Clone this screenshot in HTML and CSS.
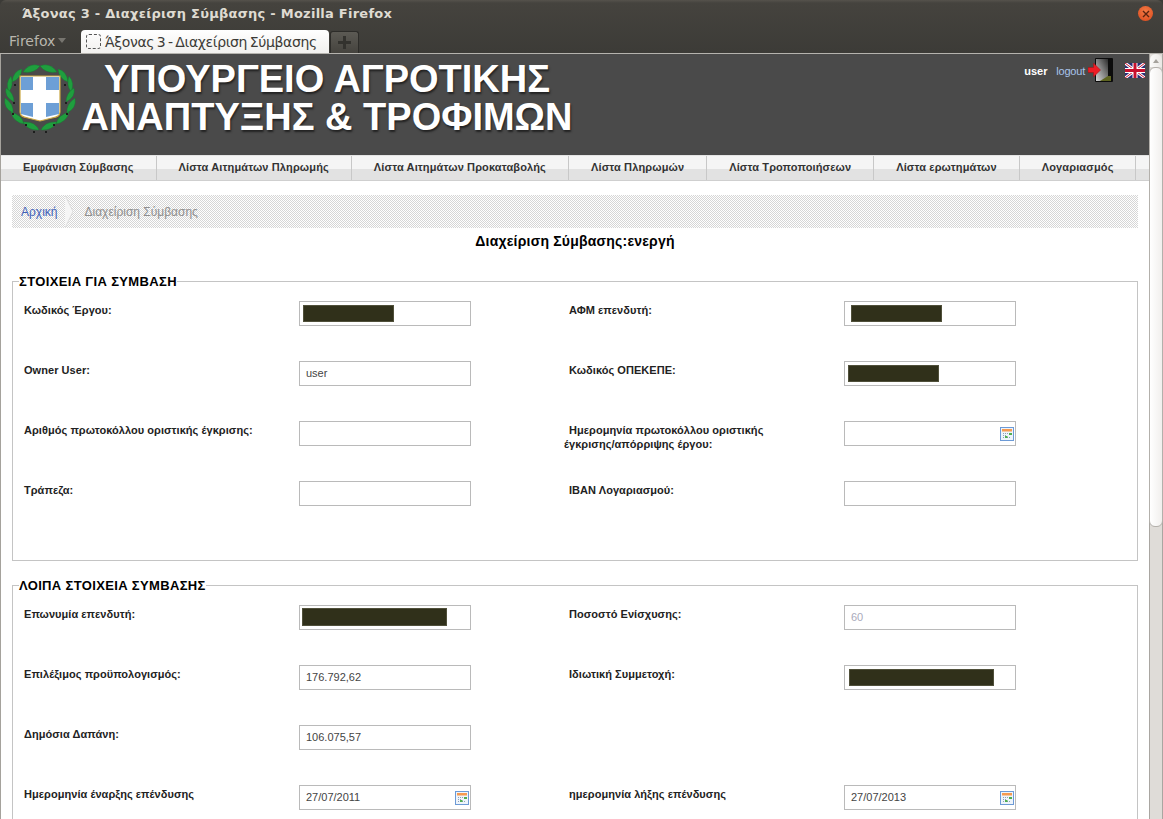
FILE: index.html
```html
<!DOCTYPE html>
<html lang="el">
<head>
<meta charset="utf-8">
<title>Άξονας 3 - Διαχείριση Σύμβασης - Mozilla Firefox</title>
<link rel="stylesheet" href="styles.css">
</head>
<body>
<div class="window">
  <div class="chrome">
    <div class="titlebar">
      <span class="window-title">Άξονας 3 - Διαχείριση Σύμβασης - Mozilla Firefox</span>
      <span class="close-btn">
        <svg width="8" height="8" viewBox="0 0 8 8"><path d="M1 1l6 6M7 1l-6 6" stroke="#5a2410" stroke-width="1.4"/></svg>
      </span>
    </div>
    <div class="tabbar">
      <span class="ff-menu">Firefox<i class="ff-caret"></i></span>
      <span class="tab"><i class="tab-icon"></i><span>Άξονας 3 - Διαχείριση Σύμβασης</span></span>
      <span class="newtab">
        <svg width="13" height="13" viewBox="0 0 13 13"><path d="M5 0h3v5h5v3H8v5H5V8H0V5h5z" fill="#33322e"/></svg>
      </span>
    </div>
  </div>
  <div class="viewport">
    <div class="page">
      <header class="site-header">
        <svg class="emblem" width="72" height="70" viewBox="0 0 72 70">
          <defs>
            <g id="wreath">
              <g fill="#1f9e3e" stroke="#157a30" stroke-width=".4">
                <path d="M36 2Q26-2 19 8Q30 10 36 2z"/>
                <path d="M18 5Q9 7 8 18Q17 15 18 5z"/>
                <path d="M7 12Q1 19 5 28Q10 21 7 12z"/>
                <path d="M2 24Q0 33 10 38Q10 29 2 24z"/>
                <path d="M1 34Q-1 44 9 49Q10 40 1 34z"/>
                <path d="M7 48Q9 58 20 60Q18 51 7 48z"/>
                <path d="M19 58Q24 67 35 66Q31 57 19 58z"/>
              </g>
              <path d="M10 20h2v2h-2zM9 38h2v2H9zM8 49h2v2H8zM21 60h2v2h-2zM29 67h2v2h-2z" fill="#1d1d1d"/>
            </g>
          </defs>
          <use href="#wreath"/>
          <use href="#wreath" transform="matrix(-1 0 0 1 72 0)"/>
          <path d="M16 12h40v36c0 4-3 5-8 6l-12 3-12-3c-5-1-8-2-8-6z" fill="#fff" stroke="#c9a640" stroke-width="1.200"/>
          <path d="M17 13h12v13H17zM42 13h13v13H42zM17 39h12v14l-12-3zM42 39h13v11l-13 3z" fill="#6d9fd6"/>
        </svg>
        <h1 class="ministry">ΥΠΟΥΡΓΕΙΟ ΑΓΡΟΤΙΚΗΣ<br>ΑΝΑΠΤΥΞΗΣ &amp; ΤΡΟΦΙΜΩΝ</h1>
        <div class="user-box">
          <b class="user-name">user</b>
          <a class="logout" href="#">logout</a>
          <svg class="door" width="26" height="25" viewBox="0 0 26 25">
            <defs>
              <linearGradient id="door-panel" x1="0" y1="1" x2="1" y2="0">
                <stop offset="0" stop-color="#d8d8d8"/>
                <stop offset=".55" stop-color="#7c7c7c"/>
                <stop offset="1" stop-color="#2c2c2c"/>
              </linearGradient>
            </defs>
            <rect x="7" y="0" width="18" height="24" rx="1" fill="#0c0c0c"/>
            <path d="M8 1h12v22H8z" fill="url(#door-panel)"/>
            <path d="M12 23l8-5h3v5z" fill="#5e6420"/>
            <path d="M0 9.500h5.500V5l7 7-7 7v-4.500H0z" fill="#ee1c25" stroke="#a00e14" stroke-width=".5"/>
          </svg>
          <svg class="flag" width="20" height="15" viewBox="0 0 20 15">
            <rect width="20" height="15" fill="#2a2f78"/>
            <path d="M0 0l20 15M20 0L0 15" stroke="#fff" stroke-width="3"/>
            <path d="M0 0l20 15M20 0L0 15" stroke="#c8102e" stroke-width="1"/>
            <path d="M10 0v15M0 7.500h20" stroke="#fff" stroke-width="5"/>
            <path d="M10 0v15M0 7.500h20" stroke="#c8102e" stroke-width="3"/>
          </svg>
        </div>
      </header>
      <nav class="main-nav">
        <a class="nav-item" href="#">Εμφάνιση Σύμβασης</a>
        <a class="nav-item" href="#">Λίστα Αιτημάτων Πληρωμής</a>
        <a class="nav-item" href="#">Λίστα Αιτημάτων Προκαταβολής</a>
        <a class="nav-item" href="#">Λίστα Πληρωμών</a>
        <a class="nav-item" href="#">Λίστα Τροποποιήσεων</a>
        <a class="nav-item" href="#">Λίστα ερωτημάτων</a>
        <a class="nav-item" href="#">Λογαριασμός</a>
      </nav>
      <main class="content">
        <div class="breadcrumb">
          <a class="crumb-home" href="#">Αρχική</a>
          <svg class="crumb-sep" width="9" height="33" viewBox="0 0 9 33"><path d="M0 0l8 16.500L0 33" fill="#f6f6f6" stroke="#dcdcdc"/></svg>
          <span class="crumb-current">Διαχείριση Σύμβασης</span>
        </div>
        <h2 class="page-title">Διαχείριση Σύμβασης:ενεργή</h2>

        <fieldset class="group">
          <legend class="group-title">ΣΤΟΙΧΕΙΑ ΓΙΑ ΣΥΜΒΑΣΗ</legend>
          <div class="form-grid">
            <label class="lbl">Κωδικός Έργου:</label>
            <div class="field"><span class="redact redact-a"></span></div>
            <i></i>
            <label class="lbl">ΑΦΜ επενδυτή:</label>
            <div class="field"><span class="redact redact-b"></span></div>
            <i></i>

            <label class="lbl">Owner User:</label>
            <div class="field">user</div>
            <i></i>
            <label class="lbl">Κωδικός ΟΠΕΚΕΠΕ:</label>
            <div class="field"><span class="redact redact-c"></span></div>
            <i></i>

            <label class="lbl">Αριθμός πρωτοκόλλου οριστικής έγκρισης:</label>
            <div class="field"></div>
            <i></i>
            <label class="lbl lbl-wrap">Ημερομηνία πρωτοκόλλου οριστικής έγκρισης/απόρριψης έργου:</label>
            <div class="field"><svg class="cal" viewBox="0 0 14 14"><use href="#cal-icon"/></svg></div>
            <i></i>

            <label class="lbl">Τράπεζα:</label>
            <div class="field"></div>
            <i></i>
            <label class="lbl">ΙΒΑΝ Λογαριασμού:</label>
            <div class="field"></div>
            <i></i>
          </div>
        </fieldset>

        <fieldset class="group">
          <legend class="group-title">ΛΟΙΠΑ ΣΤΟΙΧΕΙΑ ΣΥΜΒΑΣΗΣ</legend>
          <div class="form-grid">
            <label class="lbl">Επωνυμία επενδυτή:</label>
            <div class="field"><span class="redact redact-d"></span></div>
            <i></i>
            <label class="lbl">Ποσοστό Ενίσχυσης:</label>
            <div class="field field-muted">60</div>
            <i></i>

            <label class="lbl">Επιλέξιμος προϋπολογισμός:</label>
            <div class="field">176.792,62</div>
            <i></i>
            <label class="lbl">Ιδιωτική Συμμετοχή:</label>
            <div class="field"><span class="redact redact-e"></span></div>
            <i></i>

            <label class="lbl">Δημόσια Δαπάνη:</label>
            <div class="field">106.075,57</div>
            <i></i>
            <span></span><span></span><i></i>

            <label class="lbl">Ημερομηνία έναρξης επένδυσης</label>
            <div class="field">27/07/2011<svg class="cal" viewBox="0 0 14 14"><use href="#cal-icon"/></svg></div>
            <i></i>
            <label class="lbl">ημερομηνία λήξης επένδυσης</label>
            <div class="field">27/07/2013<svg class="cal" viewBox="0 0 14 14"><use href="#cal-icon"/></svg></div>
            <i></i>
          </div>
        </fieldset>
      </main>
    </div>
    <div class="scrollbar">
      <div class="sb-btn"><i class="sb-arrow"></i></div>
      <div class="sb-thumb"></div>
    </div>
  </div>
</div>
<svg class="defs" width="0" height="0">
  <symbol id="cal-icon" viewBox="0 0 14 14">
    <rect x=".5" y=".5" width="13" height="13" fill="#eef4fb" stroke="#6c9ad6"/>
    <rect x="2" y="2" width="10" height="2.500" fill="#f59a50"/>
    <path d="M3 6h1v1H3zM5 6h1v1H5zM7 6h1v1H7zM3 8h1v1H3zM5 8h1v1H5zM3 10h1v1H3zM7 10h1v1H7zM9 10h1v1H9z" fill="#8fa0b5"/>
    <rect x="9" y="6" width="3" height="2" fill="#4fae4f"/>
    <rect x="5" y="9" width="2.500" height="2" fill="#4fae4f"/>
  </symbol>
</svg>
</body>
</html>
```

FILE: styles.css
```css
* { box-sizing: border-box; }
html, body { margin: 0; padding: 0; height: 100%; overflow: hidden; background: #3c3b37; }
.window {
  width: 1163px;
  height: 819px;
  display: flex;
  flex-direction: column;
  font-family: "Liberation Sans", Arial, sans-serif;
  overflow: hidden;
  border-radius: 6px 6px 0 0;
}
.defs { position: absolute; }

/* Browser chrome */
.chrome {
  height: 54px;
  flex: none;
  background: linear-gradient(#55524c 0, #45433e 3px, #3c3b37 100%);
  border-bottom: 1px solid #b5b3ae;
  font-family: "DejaVu Sans", sans-serif;
}
.titlebar {
  height: 27px;
  display: flex;
  align-items: center;
  justify-content: space-between;
  padding: 0 10px 0 22px;
}
.window-title { color: #dfdbd2; font-size: 13px; font-weight: bold; letter-spacing: .25px; }
.close-btn {
  width: 15px;
  height: 15px;
  border-radius: 50%;
  background: radial-gradient(circle at 50% 35%, #f47a44, #d8481c);
  display: flex;
  align-items: center;
  justify-content: center;
}
.tabbar { height: 26px; display: flex; align-items: flex-end; padding-left: 9px; }
.ff-menu {
  width: 72px;
  height: 25px;
  color: #b9b6ae;
  font-size: 14px;
  display: flex;
  align-items: center;
  gap: 3px;
}
.ff-caret { width: 0; height: 0; border: 4px solid transparent; border-top: 5px solid #77756f; border-bottom: 0; }
.tab {
  width: 248px;
  height: 23px;
  background: linear-gradient(#fff, #f1f0ee);
  border-radius: 4px 4px 0 0;
  color: #3c3b37;
  font-size: 14px;
  letter-spacing: -.35px;
  word-spacing: -1.5px;
  display: flex;
  align-items: center;
  gap: 4px;
  padding: 0 5px;
  white-space: nowrap;
}
.tab-icon { width: 15px; height: 15px; flex: none; border: 1px dashed #555; border-radius: 3px; }
.newtab {
  width: 29px;
  height: 22px;
  margin-left: 1px;
  background: linear-gradient(#5c5a54, #45433e);
  border: 1px solid #2d2c29;
  border-bottom: 0;
  border-radius: 3px 3px 0 0;
  display: flex;
  align-items: center;
  justify-content: center;
}

/* Viewport */
.viewport { flex: 1; min-height: 0; display: flex; background: #fff; border-left: 1px solid #a5a29c; }
.page { flex: 1; min-width: 0; overflow: hidden; }
.scrollbar {
  width: 14px;
  flex: none;
  background: #dfdcd8;
  border-left: 1px solid #a9a6a1;
  border-right: 1px solid #a9a6a1;
  display: flex;
  flex-direction: column;
}
.sb-btn {
  height: 13px;
  background: linear-gradient(90deg, #fbfbfa, #e9e7e4);
  border-radius: 6px 6px 0 0;
  display: flex;
  justify-content: center;
  padding-top: 5px;
}
.sb-arrow { width: 0; height: 0; border: 3px solid transparent; border-bottom: 4px solid #a5a29c; border-top: 0; }
.sb-thumb {
  height: 460px;
  background: linear-gradient(90deg, #fff, #f1efed);
  border: 1px solid #b3b0ab;
  border-radius: 6px;
  margin: 0 -1px;
}

/* Site header */
.site-header {
  height: 101px;
  background: #4a4a4a;
  display: flex;
  align-items: flex-start;
}
.emblem { flex: none; margin: 10px 0 0 3px; overflow: visible; }
.ministry {
  width: 492px;
  margin: 6px 0 0 5px;
  color: #fff;
  font-size: 38px;
  line-height: 38px;
  font-weight: bold;
  text-align: center;
  white-space: nowrap;
  text-shadow: 1px 2px 2px #222;
}
.user-box {
  margin-left: auto;
  padding: 4px 4px 0 0;
  display: flex;
  align-items: center;
  font-size: 11px;
}
.user-name { color: #fff; width: 32px; }
.logout { color: #a9c4ea; text-decoration: none; margin-right: 3px; letter-spacing: -.2px; }
.door { flex: none; }
.flag { flex: none; margin-left: 11px; }

/* Navigation */
.main-nav {
  height: 26px;
  display: flex;
  background: linear-gradient(#f5f5f5 0, #f5f5f5 54%, #e2e2e2 54%, #e2e2e2 100%);
  border-bottom: 1px solid #cfcfcf;
  border-top: 1px solid #e4e4e4;
}
.nav-item {
  color: #333;
  font-size: 11px;
  font-weight: bold;
  letter-spacing: .13px;
  line-height: 23px;
  padding: 0 22px;
  border-right: 1px solid #c8c8c8;
  text-decoration: none;
  white-space: nowrap;
}

/* Content */
.content { padding: 14px 11px 0 11px; }
.breadcrumb {
  height: 33px;
  background: repeating-conic-gradient(#d6d6d6 0 25%, #fff 0 50%) 0 0 / 2px 2px;
  display: flex;
  align-items: center;
  font-size: 12px;
  padding-left: 9px;
}
.crumb-home { color: #3f5fb8; text-decoration: none; }
.crumb-sep { margin-left: 8px; }
.crumb-current { color: #8e8e8e; margin-left: 10px; }
.page-title {
  margin: 4px 0 24px;
  height: 18px;
  line-height: 18px;
  font-size: 14px;
  text-align: center;
  color: #000;
  letter-spacing: .2px;
}
.group {
  margin: 0 0 17px;
  padding: 12px 0 19px 11px;
  border: 1px solid #c4c4c4;
  min-width: 0;
}
.group-title {
  margin-left: -5px;
  padding: 0;
  font-size: 13px;
  line-height: 15px;
  font-weight: bold;
  color: #000;
  letter-spacing: .35px;
}
.form-grid {
  display: grid;
  grid-template-columns: repeat(2, 275px 172px 98px);
  grid-auto-rows: 60px;
}
.lbl {
  font-size: 11px;
  font-weight: bold;
  line-height: 18px;
  letter-spacing: .05px;
  color: #222;
}
.lbl-wrap {
  width: 225px;
  margin-left: -5px;
  padding-top: 2px;
  line-height: 14px;
  text-indent: 5px;
}
.field {
  height: 25px;
  border: 1px solid #bababa;
  background: #fff;
  font-size: 11px;
  line-height: 23px;
  color: #444;
  padding-left: 6px;
  display: flex;
  align-items: center;
}
.field-muted { color: #aab; }
.cal { width: 14px; height: 14px; margin: 0 1px 0 auto; }
.redact { display: block; height: 17px; background: #30301a; border: 1px solid #50503a; }
.redact-a { width: 91px; margin-left: -3px; }
.redact-b { width: 91px; }
.redact-c { width: 91px; margin-left: -3px; }
.redact-d { width: 145px; height: 18px; margin: 0 0 1px -4px; }
.redact-e { width: 145px; margin-left: -2px; }
```
